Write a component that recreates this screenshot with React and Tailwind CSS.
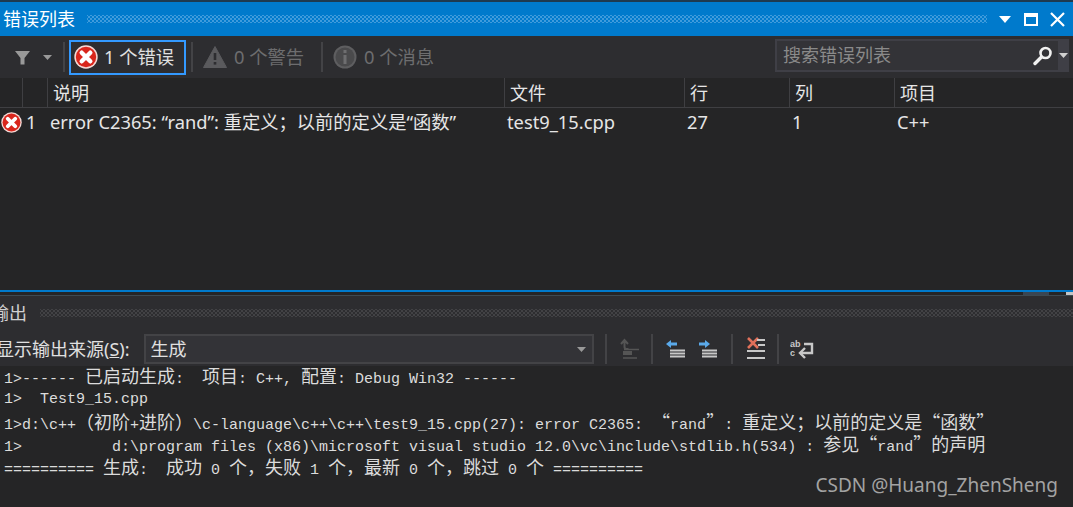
const uiFont = "font-['Noto_Sans','Noto_Sans_CJK_SC',sans-serif]";
const grip = "bg-[radial-gradient(circle,#3f9bdc_1px,transparent_1px),radial-gradient(circle,#3f9bdc_1px,transparent_1px)] bg-[length:4px_4px] [background-position:0_0,2px_2px]";
const gripDark = "bg-[radial-gradient(circle,#424245_1px,transparent_1px),radial-gradient(circle,#424245_1px,transparent_1px)] bg-[length:4px_4px] [background-position:0_0,2px_2px]";

const Sep = ({ className = "" }) => <div className={`w-[2px] h-[30px] bg-[#434346] shrink-0 ${className}`} />;

const ErrorIcon = ({ size = 24 }) => (
    <svg width={size} height={size} viewBox="0 0 24 24" className="shrink-0">
        <circle cx="12" cy="12" r="11.7" fill="#f5d9d5" />
        <circle cx="12" cy="12" r="10.2" fill="#d9261c" />
        <path d="M7.7 7.7l8.6 8.6M16.3 7.7l-8.6 8.6" stroke="#fff" strokeWidth="4.4" strokeLinecap="round" />
    </svg>
);

const WarningIcon = () => (
    <svg width="24" height="24" viewBox="0 0 24 24" className="shrink-0">
        <path d="M12 1.5L23.5 22.5H.5z" fill="#5a5a5d" stroke="#5a5a5d" strokeLinejoin="round" />
        <path d="M12 8v7" stroke="#2d2d30" strokeWidth="2.6" />
        <rect x="10.7" y="17" width="2.6" height="2.6" fill="#2d2d30" />
    </svg>
);

const InfoIcon = () => (
    <svg width="24" height="24" viewBox="0 0 24 24" className="shrink-0">
        <circle cx="12" cy="12" r="11.5" fill="#5e5e60" />
        <circle cx="12" cy="12" r="9.5" fill="#4a4a4c" />
        <rect x="10.5" y="5" width="3" height="3" fill="#6e6e70" />
        <rect x="10.5" y="10" width="3" height="9" fill="#6e6e70" />
    </svg>
);

const Caret = ({ color = "#999", w = 9, h = 5 }) => (
    <svg width={w} height={h} viewBox="0 0 9 5" className="shrink-0" preserveAspectRatio="none"><path d="M0 0h9L4.5 5z" fill={color} /></svg>
);

const Counter = ({ icon, label, className }) => (
    <div className={`flex items-center gap-[7px] text-[18.3px] text-[#6d6d6f] ${className}`}>
        {icon}
        <span>{label}</span>
    </div>
);

// CJK runs are double the width of the latin cells in the output pane
const OutLine = ({ text }) => (
    <div className="h-[22.75px] leading-[22.75px] whitespace-pre overflow-visible">
        {text.split(/([^\x00-\x7f]+)/).map((part, i) =>
            /[^\x00-\x7f]/.test(part)
                ? <span key={i} className="text-[18px] leading-none font-['Noto_Sans_CJK_SC',sans-serif]">{part}</span>
                : <span key={i} className="leading-none">{part}</span>
        )}
    </div>
);

const outputLines = [
    "1>------ 已启动生成:  项目: C++, 配置: Debug Win32 ------",
    "1>  Test9_15.cpp",
    "1>d:\\c++（初阶+进阶）\\c-language\\c++\\c++\\test9_15.cpp(27): error C2365: “rand”: 重定义；以前的定义是“函数”",
    "1>          d:\\program files (x86)\\microsoft visual studio 12.0\\vc\\include\\stdlib.h(534) : 参见“rand”的声明",
    "========== 生成:  成功 0 个，失败 1 个，最新 0 个，跳过 0 个 ==========",
];

const App = () => {
    return (
        <div className={`relative w-[1073px] h-[507px] overflow-hidden bg-[#252526] text-[#dcdcdc] ${uiFont}`}>
            <div className="h-[2px] bg-[#1e3a50]" />

            {/* error list title */}
            <div className="h-[34px] bg-[#007acc] flex items-center pl-[3px] pr-[8px] text-white">
                <span className="text-[18px] leading-none">错误列表</span>
                <div className={`flex-1 h-[8px] ml-[12px] mr-[12px] ${grip}`} />
                <Caret color="#fff" w={12} h={7} />
                <div className="w-[14px] h-[13px] border-2 border-t-[4px] border-white ml-[13px]" />
                <svg width="15" height="15" viewBox="0 0 15 15" className="ml-[12px]">
                    <path d="M1 1l13 13M14 1L1 14" stroke="#fff" strokeWidth="2.2" />
                </svg>
            </div>

            {/* error list toolbar */}
            <div className="h-[42px] bg-[#2d2d30] flex items-center pl-[15px]">
                <svg width="15" height="15" viewBox="0 0 15 15" className="shrink-0">
                    <path d="M0 1h15L9.5 8v6.5h-4V8z" fill="#999" />
                </svg>
                <div className="ml-[13px]"><Caret /></div>
                <Sep className="ml-[11px]" />
                <div className="ml-[4px] w-[117px] h-[35px] border-2 border-[#3399ff] flex items-center pl-[3px] gap-[6px] text-[18.3px] text-[#e0e0e0]">
                    <ErrorIcon />
                    <span>1 个错误</span>
                </div>
                <Sep className="ml-[5px]" />
                <Counter icon={<WarningIcon />} label="0 个警告" className="ml-[10px]" />
                <Sep className="ml-[17px]" />
                <Counter icon={<InfoIcon />} label="0 个消息" className="ml-[10px]" />
                <div className="ml-auto mr-[4px] mb-[3px] flex h-[33px] w-[294px] bg-[#3f3f46] p-[2px] pr-0">
                    <div className="flex-1 bg-[#333337] flex items-center pl-[6px] text-[18px] text-[#8a8a8a]">
                        <span>搜索错误列表</span>
                        <svg width="20" height="20" viewBox="0 0 20 20" className="ml-auto mr-[5px]">
                            <circle cx="12.5" cy="7" r="5" fill="none" stroke="#f1f1f1" strokeWidth="2.6" />
                            <path d="M8.5 11L2 17.5" stroke="#f1f1f1" strokeWidth="3.4" strokeLinecap="round" />
                        </svg>
                    </div>
                    <div className="w-[11px] flex items-center justify-center"><Caret color="#d0d0d0" /></div>
                </div>
            </div>

            {/* table */}
            <div className="h-[212px] bg-[#252526]">
                <div className="h-[30px] flex items-center border-b border-[#3f3f42] text-[18px] text-[#e6e6e6]">
                    <div className="w-[23px] h-full border-r border-[#3f3f42] shrink-0" />
                    <div className="w-[25px] h-full border-r border-[#3f3f42] shrink-0" />
                    <div className="w-[457px] h-full border-r border-[#3f3f42] pl-[5px] leading-[30px] shrink-0">说明</div>
                    <div className="w-[180px] h-full border-r border-[#3f3f42] pl-[5px] leading-[30px] shrink-0">文件</div>
                    <div className="w-[105px] h-full border-r border-[#3f3f42] pl-[5px] leading-[30px] shrink-0">行</div>
                    <div className="w-[105px] h-full border-r border-[#3f3f42] pl-[5px] leading-[30px] shrink-0">列</div>
                    <div className="pl-[5px] leading-[30px]">项目</div>
                </div>
                <div className="h-[28px] flex items-center text-[18.3px] text-[#e6e6e6]">
                    <div className="w-[23px] pl-[1px] shrink-0"><ErrorIcon size={21} /></div>
                    <div className="w-[27px] pl-[3px] shrink-0">1</div>
                    <div className="w-[457px] shrink-0 whitespace-pre">error C2365: “rand”: 重定义；以前的定义是“函数”</div>
                    <div className="w-[180px] shrink-0">test9_15.cpp</div>
                    <div className="w-[105px] shrink-0">27</div>
                    <div className="w-[105px] shrink-0">1</div>
                    <div>C++</div>
                </div>
            </div>

            {/* splitter */}
            <div className="h-[2px] bg-[#007acc]" />
            <div className="h-[4px] bg-[#252526] border-b border-[#3e4a52] flex justify-end">
                <div className="w-[26px] h-full bg-[#3a4652] mr-[17px]" />
                <div className="w-[7px] h-full bg-[#c4c4c4]" />
            </div>

            {/* output title */}
            <div className="h-[34px] bg-[#2d2d30] flex items-center text-[#d0d0d0]">
                <span className="text-[18px] leading-none -ml-[9px]">输出</span>
                <div className={`flex-1 h-[8px] ml-[13px] ${gripDark}`} />
            </div>

            {/* output toolbar */}
            <div className="h-[36px] bg-[#2d2d30] flex items-center pt-[4px] pb-[2px] text-[#e0e0e0] text-[18px]">
                <span className="-ml-[4px] whitespace-pre">显示输出来源(<span className="underline">S</span>):</span>
                <div className="ml-[14px] w-[450px] h-[30px] bg-[#333337] border-2 border-[#434346] flex items-center pl-[5px] pr-[6px] shrink-0">
                    <span>生成</span>
                    <div className="ml-auto"><Caret /></div>
                </div>
                <Sep className="ml-[11px]" />
                <svg width="22" height="22" viewBox="0 0 22 22" className="ml-[12px] shrink-0" fill="none">
                    <path d="M2 6l3.5-4L9 6M5.5 3v6a2 2 0 0 0 2 2h2" stroke="#555" strokeWidth="2" />
                    <rect x="4" y="13" width="9" height="4" fill="#555" />
                    <path d="M5 11.5h15M4 20h14" stroke="#555" strokeWidth="1.5" />
                </svg>
                <Sep className="ml-[10px]" />
                <svg width="20" height="18" viewBox="0 0 20 18" className="ml-[13px] shrink-0">
                    <path d="M0 4l5-4v2.5h6v3H5V8z" fill="#5aa9ea" />
                    <path d="M4 9.500h15v2H4zM4 12.500h15v2H4zM4 15.500h15v2H4z" fill="#c8c8c8" />
                </svg>
                <svg width="20" height="18" viewBox="0 0 20 18" className="ml-[13px] shrink-0">
                    <path d="M11 4L6 0v2.500H0v3h6V8z" fill="#5aa9ea" />
                    <path d="M3 9.500h15v2H3zM3 12.500h15v2H3zM3 15.500h15v2H3z" fill="#c8c8c8" />
                </svg>
                <Sep className="ml-[12px]" />
                <svg width="20" height="24" viewBox="0 0 20 24" className="ml-[13px] shrink-0">
                    <path d="M2 1l10 10M12 1L2 11" stroke="#e0705a" strokeWidth="2.600" />
                    <path d="M11 2h8v2h-8zM12 7h7v2h-7zM1 13h18v2H1zM1 20h18v2H1z" fill="#c8c8c8" />
                </svg>
                <Sep className="ml-[11px]" />
                <svg width="24" height="20" viewBox="0 0 24 20" className="ml-[11px] shrink-0" fill="none">
                    <text x="0" y="8" fontSize="9" fontWeight="bold" fontFamily="Liberation Sans" fill="#c8c8c8">ab</text>
                    <text x="0" y="17" fontSize="9" fontWeight="bold" fontFamily="Liberation Sans" fill="#c8c8c8">c</text>
                    <path d="M14 5h8v9H10" stroke="#c8c8c8" strokeWidth="2.400" />
                    <path d="M15 9l-5 5 5 5" stroke="#c8c8c8" strokeWidth="2.400" />
                </svg>
            </div>

            {/* output text */}
            <div className="pl-[4px] text-[15px] text-[#dcdcdc] font-['Liberation_Mono','Noto_Sans_CJK_SC',monospace]">
                {outputLines.map((line) => <OutLine key={line} text={line} />)}
            </div>

            <span className="absolute right-[15px] bottom-[12px] text-[19px] leading-none text-[#a3a3a3]">CSDN @Huang_ZhenSheng</span>
        </div>
    );
}

export default App;
